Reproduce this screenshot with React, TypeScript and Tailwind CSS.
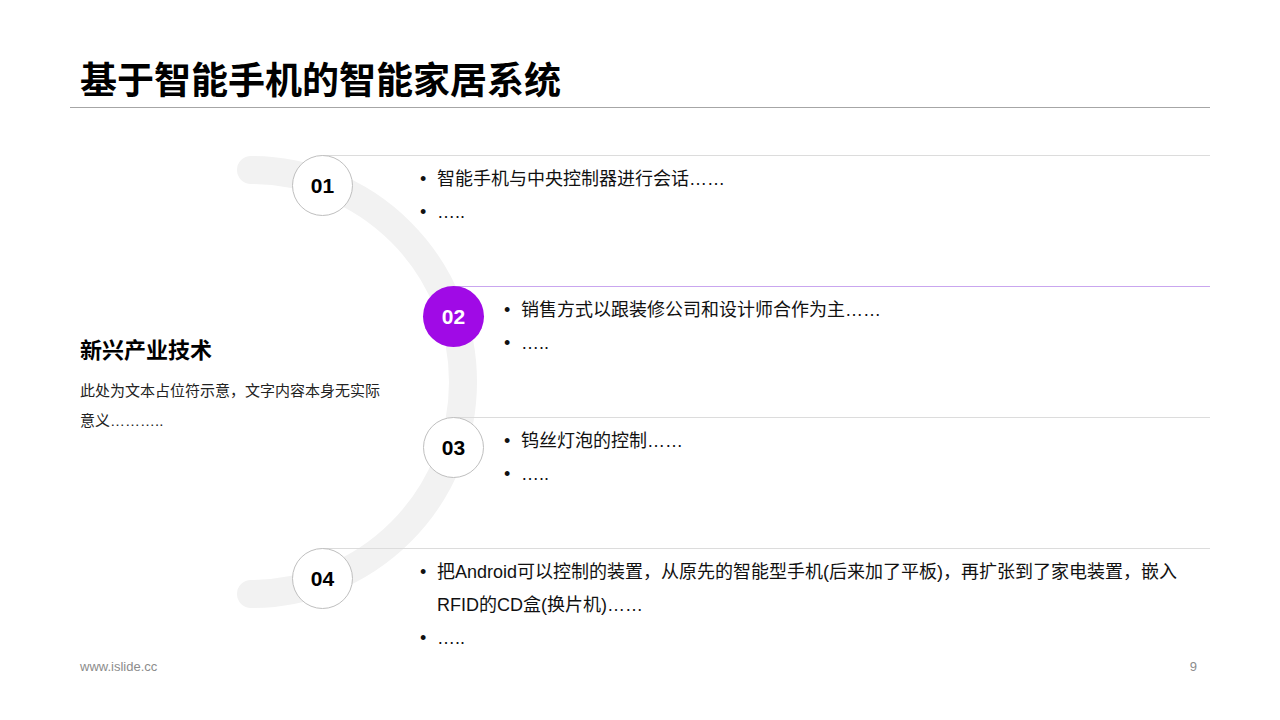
import React from 'react';

const font = { fontFamily: '"Liberation Sans", "Noto Sans CJK SC", sans-serif' };

const items = [
  { n: '01', x: 322, y: 185, tx: 420, lines: ['智能手机与中央控制器进行会话……'] },
  { n: '02', x: 453, y: 316, tx: 504, lines: ['销售方式以跟装修公司和设计师合作为主……'], active: true },
  { n: '03', x: 453, y: 447, tx: 504, lines: ['钨丝灯泡的控制……'] },
  {
    n: '04', x: 322, y: 578, tx: 420,
    lines: ['把Android可以控制的装置，从原先的智能型手机(后来加了平板)，再扩张到了家电装置，嵌入RFID的CD盒(换片机)……'],
  },
];

export default function App() {
  return (
    <div className="relative w-[1280px] h-[720px] bg-white overflow-hidden text-[#111]" style={font}>
      <div className="pt-[57px] px-[80px]">
        <h1 className="text-[37px] font-bold leading-[50px] text-black">基于智能手机的智能家居系统</h1>
      </div>
      <div className="mx-[70px] w-[1140px] h-px bg-[#a6a6a6]" />

      <svg className="absolute left-0 top-0" width="1280" height="720">
        <path d="M251 170 A212 212 0 0 1 251 594" fill="none" stroke="#f2f2f2" strokeWidth="28" strokeLinecap="round" />
      </svg>

      <div className="absolute left-[80px] top-[336px] w-[310px] flex flex-col gap-[10px]">
        <div className="text-[22px] font-bold leading-[30px] text-black">新兴产业技术</div>
        <p className="text-[15px] leading-[30px] text-[#222]">此处为文本占位符示意，文字内容本身无实际意义………..</p>
      </div>

      {items.map((it) => (
        <React.Fragment key={it.n}>
          <div
            className={`absolute h-px ${it.active ? 'bg-[#c9a6ef]' : 'bg-[#dcdcdc]'}`}
            style={{ left: it.x, top: it.y - 30, width: 1210 - it.x }}
          />
          <div
            className={`absolute w-[61px] h-[61px] rounded-full flex items-center justify-center text-[21px] font-bold ${
              it.active ? 'bg-[#a00ae6] text-white' : 'bg-white border border-[#bfbfbf] text-black'
            }`}
            style={{ left: it.x - 30, top: it.y - 30 }}
          >
            {it.n}
          </div>
          <ul className="absolute text-[18px] leading-[33px] text-[#111]" style={{ left: it.tx, top: it.y - 22, width: 1192 - it.tx }}>
            {[...it.lines, '…..'].map((l, i) => (
              <li key={i} className="flex">
                <span className="w-[17px] shrink-0">•</span>
                <span>{l}</span>
              </li>
            ))}
          </ul>
        </React.Fragment>
      ))}

      <div className="absolute left-[80px] right-[80px] top-[657px] flex justify-between text-[13px] text-[#8c8c8c]">
        <span>www.islide.cc</span>
        <span className="pr-[3px]">9</span>
      </div>
    </div>
  );
}
